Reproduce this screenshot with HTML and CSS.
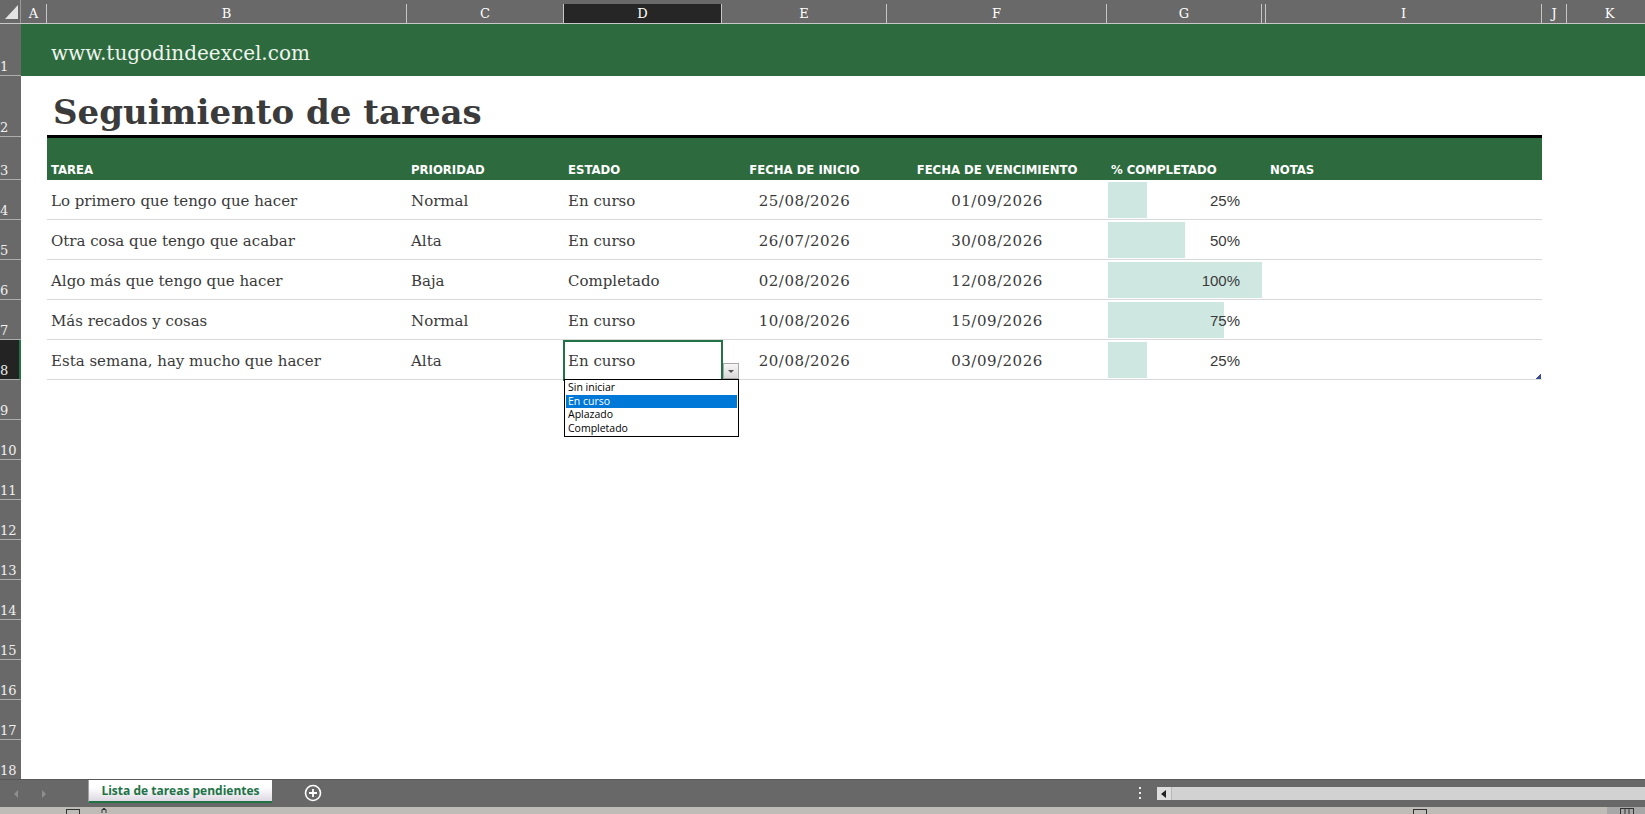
FILE: index.html
```html
<!DOCTYPE html>
<html lang="es">
<head>
<meta charset="utf-8">
<title>Seguimiento de tareas</title>
<link rel="stylesheet" href="styles.css">
</head>
<body>
<div class="app">
  <div class="colheads">
    <div class="corner"><svg width="21" height="23" viewBox="0 0 21 23"><polygon points="18,5 18,19 5,19" fill="#e4e4e4"/></svg></div>
    <div class="ch w-a">A</div>
    <div class="ch w-b">B</div>
    <div class="ch w-c">C</div>
    <div class="ch w-d sel">D</div>
    <div class="ch w-e">E</div>
    <div class="ch w-f">F</div>
    <div class="ch w-g">G</div>
    <div class="ch w-h"></div>
    <div class="ch w-i">I</div>
    <div class="ch w-j">J</div>
    <div class="ch w-k">K</div>
  </div>

  <div class="main">
    <div class="rowheads">
      <div class="rh h1">1</div>
      <div class="rh h2">2</div>
      <div class="rh h3">3</div>
      <div class="rh">4</div>
      <div class="rh">5</div>
      <div class="rh">6</div>
      <div class="rh">7</div>
      <div class="rh sel">8</div>
      <div class="rh">9</div>
      <div class="rh">10</div>
      <div class="rh">11</div>
      <div class="rh">12</div>
      <div class="rh">13</div>
      <div class="rh">14</div>
      <div class="rh">15</div>
      <div class="rh">16</div>
      <div class="rh">17</div>
      <div class="rh">18</div>
    </div>

    <div class="sheet">
      <div class="banner">www.tugodindeexcel.com</div>
      <div class="titlerow"><h1 class="title">Seguimiento de tareas</h1></div>

      <div class="grid thead">
        <div class="c">TAREA</div>
        <div class="c">PRIORIDAD</div>
        <div class="c">ESTADO</div>
        <div class="c center">FECHA DE INICIO</div>
        <div class="c center">FECHA DE VENCIMIENTO</div>
        <div class="c">% COMPLETADO</div>
        <div class="c"></div>
        <div class="c">NOTAS</div>
      </div>

      <div class="grid trow">
        <div class="c">Lo primero que tengo que hacer</div>
        <div class="c">Normal</div>
        <div class="c">En curso</div>
        <div class="c center date">25/08/2026</div>
        <div class="c center date">01/09/2026</div>
        <div class="c pct"><span class="bar" style="width:39px"></span><span class="num">25%</span></div>
        <div class="c"></div>
        <div class="c"></div>
      </div>

      <div class="grid trow">
        <div class="c">Otra cosa que tengo que acabar</div>
        <div class="c">Alta</div>
        <div class="c">En curso</div>
        <div class="c center date">26/07/2026</div>
        <div class="c center date">30/08/2026</div>
        <div class="c pct"><span class="bar" style="width:77px"></span><span class="num">50%</span></div>
        <div class="c"></div>
        <div class="c"></div>
      </div>

      <div class="grid trow">
        <div class="c">Algo más que tengo que hacer</div>
        <div class="c">Baja</div>
        <div class="c">Completado</div>
        <div class="c center date">02/08/2026</div>
        <div class="c center date">12/08/2026</div>
        <div class="c pct"><span class="bar" style="width:154px"></span><span class="num">100%</span></div>
        <div class="c"></div>
        <div class="c"></div>
      </div>

      <div class="grid trow">
        <div class="c">Más recados y cosas</div>
        <div class="c">Normal</div>
        <div class="c">En curso</div>
        <div class="c center date">10/08/2026</div>
        <div class="c center date">15/09/2026</div>
        <div class="c pct"><span class="bar" style="width:116px"></span><span class="num">75%</span></div>
        <div class="c"></div>
        <div class="c"></div>
      </div>

      <div class="grid trow">
        <div class="c">Esta semana, hay mucho que hacer</div>
        <div class="c">Alta</div>
        <div class="c active">En curso
          <span class="selbox"></span>
          <span class="ddbtn"><svg width="14" height="14" viewBox="0 0 14 14"><polygon points="4,6 10,6 7,9" fill="#555"/></svg></span>
          <div class="ddlist">
            <div class="opt">Sin iniciar</div>
            <div class="opt hl">En curso</div>
            <div class="opt">Aplazado</div>
            <div class="opt">Completado</div>
          </div>
        </div>
        <div class="c center date">20/08/2026</div>
        <div class="c center date">03/09/2026</div>
        <div class="c pct"><span class="bar" style="width:39px"></span><span class="num">25%</span></div>
        <div class="c"></div>
        <div class="c"><span class="handle"></span></div>
      </div>
    </div>
  </div>

  <div class="tabbar">
    <div class="nav">
      <svg class="arr" width="6" height="10" viewBox="0 0 6 10"><polygon points="5,1 5,9 1,5" fill="#8e8e8e"/></svg>
      <svg class="arr" width="6" height="10" viewBox="0 0 6 10"><polygon points="1,1 1,9 5,5" fill="#8e8e8e"/></svg>
    </div>
    <div class="tab">Lista de tareas pendientes</div>
    <svg class="plus" width="18" height="18" viewBox="0 0 18 18"><circle cx="9" cy="9" r="7.5" fill="none" stroke="#fff" stroke-width="1.6"/><path d="M9 5v8M5 9h8" stroke="#fff" stroke-width="1.8"/></svg>
    <div class="hscroll">
      <div class="dots"><span></span><span></span><span></span></div>
      <div class="sb">
        <div class="sbbtn"><svg width="8" height="10" viewBox="0 0 8 10"><polygon points="6,1 6,9 1,5" fill="#222"/></svg></div>
        <div class="track"></div>
      </div>
    </div>
  </div>

  <div class="statusbar">
    <svg class="si si1" width="14" height="7" viewBox="0 0 14 7"><rect x="0.5" y="2.5" width="13" height="8" fill="none" stroke="#333"/></svg>
    <svg class="si si2" width="14" height="7" viewBox="0 0 14 7"><path d="M5 6V2.5h4V6" fill="none" stroke="#333"/><rect x="6" y="1" width="2" height="2" fill="#333"/></svg>
    <svg class="si si3" width="14" height="7" viewBox="0 0 14 7"><rect x="0.5" y="2.5" width="13" height="8" fill="none" stroke="#333"/></svg>
    <div class="viewsel"><svg width="14" height="7" viewBox="0 0 14 7"><rect x="0.5" y="1.5" width="13" height="8" fill="none" stroke="#333"/><path d="M5 1.5v6M9 1.5v6" stroke="#333"/></svg></div>
  </div>
</div>
</body>
</html>
```

FILE: styles.css
```css
* { box-sizing: border-box; margin: 0; padding: 0; }
html, body { width: 1645px; height: 814px; overflow: hidden; background: #fff; }
body { font-family: "DejaVu Serif", serif; }

.app { width: 1645px; height: 814px; display: flex; flex-direction: column; overflow: hidden; }

/* column headers */
.colheads { flex: none; height: 24px; display: flex; align-items: flex-end; background: #696969; border-bottom: 1px solid #c8c8c8; overflow: hidden; }
.corner { flex: none; width: 21px; height: 23px; border-right: 1px solid #9a9a9a; }
.corner svg { display: block; }
.ch { flex: none; height: 19px; border-right: 1px solid #c6c6c6; color: #fff; font: 13px/19px "DejaVu Serif", serif; text-align: center; }
.ch.sel { background: #262626; }
.w-a { width: 26px; }
.w-b { width: 360px; }
.w-c { width: 157px; }
.w-d { width: 158px; }
.w-e { width: 165px; }
.w-f { width: 220px; }
.w-g { width: 155px; }
.w-h { width: 4px; }
.w-i { width: 276px; }
.w-j { width: 25px; }
.w-k { width: 85px; border-right: none; }

/* body */
.main { flex: none; height: 755px; display: flex; overflow: hidden; }
.rowheads { flex: none; width: 21px; background: #696969; display: flex; flex-direction: column; }
.rh { flex: none; height: 40px; border-bottom: 1px solid #adadad; color: #f0f0f0; font: 13px/14px "DejaVu Serif", serif; display: flex; align-items: flex-end; padding: 0 0 1px 0; }
.rh.h1 { height: 52px; }
.rh.h2 { height: 61px; }
.rh.h3 { height: 43px; }
.rh.sel { background: #232323; border-right: 2px solid #217346; }

.sheet { flex: 1; background: #fff; }

.banner { height: 52px; background: #2d6a3e; color: #eef4ee; font: 20px/24px "DejaVu Serif", serif; display: flex; align-items: center; padding: 5px 0 0 30px; }

.titlerow { margin-left: 26px; width: 1495px; height: 62px; border-bottom: 3px solid #000; display: flex; align-items: flex-end; padding: 0 0 3px 6px; }
.title { font: bold 34px/40px "DejaVu Serif", serif; color: #3b3b3b; }

.grid { margin-left: 26px; width: 1495px; display: grid; grid-template-columns: 360px 157px 158px 165px 220px 155px 4px 276px; }

.thead { height: 42px; background: #2d6a3e; }
.thead .c { align-self: end; padding: 0 4px 2px; color: #fff; font: bold 13px/16px "Liberation Sans Narrow", "DejaVu Sans Condensed", "Liberation Sans", sans-serif; white-space: nowrap; }
.thead .c.center { text-align: center; }

.trow { height: 40px; border-bottom: 1px solid #d9d9d9; }
.trow .c { position: relative; display: flex; align-items: center; padding: 3px 4px 0; font: 15px/18px "DejaVu Serif", serif; color: #3a3a3a; white-space: nowrap; }
.trow .c.center { justify-content: center; }
.trow .c.date { letter-spacing: 0.5px; }
.trow .c.pct { justify-content: flex-end; padding-right: 22px; font-family: "Liberation Sans", sans-serif; }
.bar { position: absolute; left: 1px; top: 2px; bottom: 1px; background: #cfe7e1; }
.num { position: relative; }

/* selected cell + validation dropdown */
.selbox { position: absolute; left: -1px; top: 0; width: 160px; height: 41px; border: 2px solid #217346; }
.ddbtn { position: absolute; left: 159px; top: 23px; width: 16px; height: 16px; border: 1px solid #a9a9a9; background: linear-gradient(#f6f6f6, #d9d9d9); }
.ddbtn svg { display: block; }
.ddlist { position: absolute; left: 0; top: 39px; width: 175px; height: 58px; z-index: 5; border: 1px solid #000; background: #fff; padding: 1px 1px 1px 0; font: 10.5px/13.5px "Open Sans", "Noto Sans", sans-serif; color: #000; letter-spacing: 0; }
.opt { height: 13.5px; padding-left: 3px; }
.opt.hl { background: #0078d7; color: #fff; margin-left: 1px; padding-left: 2px; }
.handle { position: absolute; right: 1px; bottom: 0; width: 5px; height: 5px; background: linear-gradient(135deg, transparent 50%, #3b4a96 50%); }

/* sheet tab bar */
.tabbar { flex: none; height: 28px; background: #686868; border-top: 1px solid #595959; display: flex; align-items: flex-start; }
.nav { flex: none; width: 88px; height: 27px; display: flex; align-items: center; gap: 22px; padding-left: 13px; }
.arr { display: block; }
.tab { flex: none; width: 184px; height: 23px; border-left: 1px solid #a0a0a0; border-bottom: 2px solid #217346; background: linear-gradient(#ffffff 35%, #ddd8e2); color: #217346; font: bold 12px/21px "Open Sans", "Noto Sans", sans-serif; text-align: center; }
.plus { flex: none; display: block; margin: 4px 0 0 32px; }
.hscroll { margin-left: auto; flex: none; width: 513px; height: 27px; display: flex; align-items: flex-start; }
.dots { flex: none; width: 25px; height: 27px; display: flex; flex-direction: column; align-items: flex-start; gap: 3px; padding: 7px 0 0 7px; }
.dots span { display: block; width: 2px; height: 2px; background: #f0f0f0; }
.sb { flex: 1; height: 13px; margin-top: 7px; display: flex; }
.sbbtn { flex: none; width: 15px; height: 13px; background: #dedede; border-right: 1px solid #b8b8b8; display: flex; align-items: center; justify-content: center; }
.sbbtn svg { display: block; }
.track { flex: 1; background: #d2d2d2; }

/* status bar */
.statusbar { flex: none; height: 7px; background: #bfbcb8; display: flex; align-items: flex-start; overflow: hidden; }
.si { flex: none; display: block; }
.si1 { margin-left: 66px; }
.si2 { margin-left: 17px; }
.si3 { margin-left: auto; }
.viewsel { flex: none; width: 38px; height: 7px; margin-left: 180px; background: #a7a7a7; padding-left: 13px; }
.viewsel svg { display: block; }
```
